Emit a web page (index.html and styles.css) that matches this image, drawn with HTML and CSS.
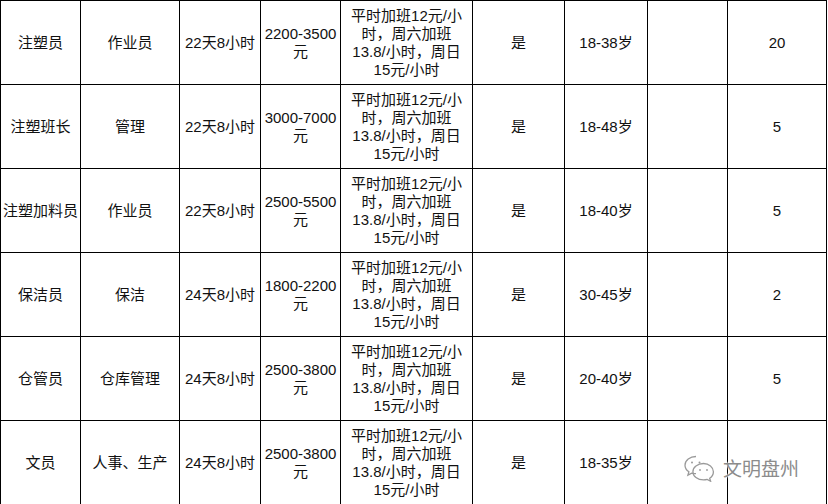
FILE: index.html
```html
<!DOCTYPE html>
<html lang="zh-CN">
<head>
<meta charset="utf-8">
<title>招聘岗位</title>
<link rel="stylesheet" href="styles.css">
</head>
<body>
<div class="page">
  <div class="grid">
    <div class="c">注塑员</div>
    <div class="c">作业员</div>
    <div class="c">22天8小时</div>
    <div class="c">2200-3500<br>元</div>
    <div class="c">平时加班12元/小<br>时，周六加班<br>13.8/小时，周日<br>15元/小时</div>
    <div class="c">是</div>
    <div class="c">18-38岁</div>
    <div class="c"></div>
    <div class="c">20</div>

    <div class="c">注塑班长</div>
    <div class="c">管理</div>
    <div class="c">22天8小时</div>
    <div class="c">3000-7000<br>元</div>
    <div class="c">平时加班12元/小<br>时，周六加班<br>13.8/小时，周日<br>15元/小时</div>
    <div class="c">是</div>
    <div class="c">18-48岁</div>
    <div class="c"></div>
    <div class="c">5</div>

    <div class="c">注塑加料员</div>
    <div class="c">作业员</div>
    <div class="c">22天8小时</div>
    <div class="c">2500-5500<br>元</div>
    <div class="c">平时加班12元/小<br>时，周六加班<br>13.8/小时，周日<br>15元/小时</div>
    <div class="c">是</div>
    <div class="c">18-40岁</div>
    <div class="c"></div>
    <div class="c">5</div>

    <div class="c">保洁员</div>
    <div class="c">保洁</div>
    <div class="c">24天8小时</div>
    <div class="c">1800-2200<br>元</div>
    <div class="c">平时加班12元/小<br>时，周六加班<br>13.8/小时，周日<br>15元/小时</div>
    <div class="c">是</div>
    <div class="c">30-45岁</div>
    <div class="c"></div>
    <div class="c">2</div>

    <div class="c">仓管员</div>
    <div class="c">仓库管理</div>
    <div class="c">24天8小时</div>
    <div class="c">2500-3800<br>元</div>
    <div class="c">平时加班12元/小<br>时，周六加班<br>13.8/小时，周日<br>15元/小时</div>
    <div class="c">是</div>
    <div class="c">20-40岁</div>
    <div class="c"></div>
    <div class="c">5</div>

    <div class="c">文员</div>
    <div class="c">人事、生产</div>
    <div class="c">24天8小时</div>
    <div class="c">2500-3800<br>元</div>
    <div class="c">平时加班12元/小<br>时，周六加班<br>13.8/小时，周日<br>15元/小时</div>
    <div class="c">是</div>
    <div class="c">18-35岁</div>
    <div class="c"></div>
    <div class="c"></div>
  </div>

  <div class="watermark">
    <svg class="wm-icon" width="34" height="28" viewBox="0 0 34 28" fill="none" stroke="#9a9a9a" stroke-width="1.3">
      <path d="M13 2.5C6.9 2.5 2 6.4 2 11.2c0 2.7 1.5 5 3.9 6.6l-1 3.3 3.8-2c1.3.4 2.8.6 4.3.6"/>
      <path d="M20.5 9.5c-6 0-10.6 3.700-10.6 8.2s4.6 8.2 10.6 8.2c1.3 0 2.6-.2 3.7-.5l3.4 1.8-.9-3c2.3-1.5 3.7-3.9 3.7-6.5 0-4.5-4.5-8.2-9.9-8.2z"/>
      <circle cx="9" cy="8.5" r="1" fill="#9a9a9a" stroke="none"/>
      <circle cx="16.5" cy="8.5" r="1" fill="#9a9a9a" stroke="none"/>
      <circle cx="17" cy="16" r="0.9" fill="#9a9a9a" stroke="none"/>
      <circle cx="24" cy="16" r="0.9" fill="#9a9a9a" stroke="none"/>
    </svg>
    <span class="wm-text">文明盘州</span>
  </div>
</div>
</body>
</html>
```

FILE: styles.css
```css
html, body {
  margin: 0;
  padding: 0;
  background: #fff;
}

.page {
  position: relative;
  width: 828px;
  height: 504px;
  overflow: hidden;
}

.grid {
  display: grid;
  grid-template-columns: 79px 98px 80px 79px 131px 91px 82px 79px 98px;
  grid-auto-rows: 83px;
  gap: 1px;
  padding: 1px;
  width: 827px;
  box-sizing: border-box;
  background: #000;
  font-family: "Liberation Sans", "Noto Sans CJK SC", sans-serif;
  font-size: 15px;
  line-height: 18px;
  color: #111;
}

.c {
  background: #fff;
  display: flex;
  align-items: center;
  justify-content: center;
  text-align: center;
  padding-top: 1px;
  box-sizing: border-box;
}

.watermark {
  position: absolute;
  left: 683px;
  top: 454px;
  display: flex;
  align-items: center;
  gap: 6px;
}

.wm-icon {
  display: block;
}

.wm-text {
  font-family: "Noto Sans CJK SC", sans-serif;
  font-size: 19px;
  line-height: 24px;
  color: #8c8c8c;
  text-shadow: 0 0 2px #fff, 0 0 2px #fff;
}
```
